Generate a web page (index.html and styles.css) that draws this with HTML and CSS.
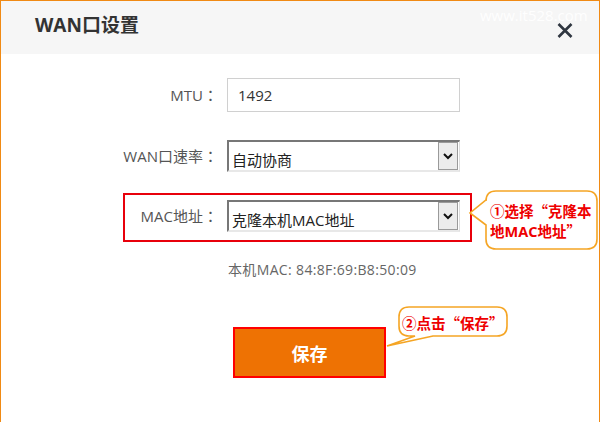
FILE: index.html
```html
<!DOCTYPE html>
<html lang="zh-CN">
<head>
<meta charset="utf-8">
<title>WAN口设置</title>
<link rel="stylesheet" href="styles.css">
</head>
<body>
<div class="dialog">
  <div class="header">
    <h1 class="title">WAN口设置</h1>
    <span class="watermark">www.it528.com</span>
    <svg class="close" width="16" height="15" viewBox="0 0 16 15"><path d="M1.5 1 L14.5 14 M14.5 1 L1.5 14" stroke="#2f3640" stroke-width="2.6" fill="none"/></svg>
  </div>
  <div class="body">
    <div class="form">
      <div class="row">
        <label class="label">MTU<span class="colon" lang="zh-Hant">：</span></label>
        <div class="input">1492</div>
      </div>
      <div class="row">
        <label class="label">WAN口速率<span class="colon" lang="zh-Hant">：</span></label>
        <div class="select">
          <span class="select-text">自动协商</span>
          <span class="select-btn"><svg width="10" height="7" viewBox="0 0 10 7"><path d="M1 1 L5 5 L9 1" stroke="#111" stroke-width="2" fill="none"/></svg></span>
        </div>
      </div>
      <div class="row">
        <label class="label">MAC地址<span class="colon" lang="zh-Hant">：</span></label>
        <div class="select">
          <span class="select-text">克隆本机MAC地址</span>
          <span class="select-btn"><svg width="10" height="7" viewBox="0 0 10 7"><path d="M1 1 L5 5 L9 1" stroke="#111" stroke-width="2" fill="none"/></svg></span>
        </div>
      </div>
    </div>
    <div class="mac-info">本机MAC: 84:8F:69:B8:50:09</div>
    <button class="save">保存</button>
  </div>

  <div class="highlight"></div>

  <div class="callout callout-1">
    <svg class="bubble" width="132" height="62" viewBox="0 0 132 62"><path d="M28 2 H119 Q129 2 129 12 V50 Q129 60 119 60 H28 Q18 60 18 50 V36 L2 24 L18 11 V12 Q18 2 28 2 Z" fill="#fff" stroke="#f5a524" stroke-width="1.6"/></svg>
    <div class="callout-text c1-text">①选择<span class="q">“</span>克隆本<br>地MAC地址<span class="q">”</span></div>
  </div>

  <div class="callout callout-2">
    <svg class="bubble" width="126" height="44" viewBox="0 0 126 44"><path d="M24 2 H112 Q122 2 122 12 V21 Q122 31 112 31 H48 L2 41 L30 31 H24 Q14 31 14 21 V12 Q14 2 24 2 Z" fill="#fff" stroke="#f5a524" stroke-width="1.6"/></svg>
    <div class="callout-text c2-text">②点击<span class="q">“</span>保存<span class="q">”</span></div>
  </div>
</div>
</body>
</html>
```
FILE: styles.css
```css
* { box-sizing: border-box; }
html, body { margin: 0; padding: 0; background: #fff; }
body { font-family: "Open Sans", "Noto Sans CJK SC", sans-serif; color: #555; }

.dialog {
  position: relative;
  width: 600px;
  height: 422px;
  border-top: 1px solid #f08a14;
  border-left: 1px solid #f08a14;
  border-right: 1px solid #f08a14;
  overflow: hidden;
}

.header {
  position: relative;
  height: 53px;
  background: #f6f6f6;
  display: flex;
  align-items: center;
  padding-left: 34px;
}
.title {
  margin: 0;
  font-size: 19px;
  font-weight: bold;
  color: #333;
  line-height: 1;
  margin-top: -4px;
}
.watermark {
  position: absolute;
  left: 479px;
  top: 4px;
  font-size: 15px;
  color: rgba(255,255,255,0.95);
}
.close {
  position: absolute;
  left: 556px;
  top: 22px;
}

.body { padding-top: 24px; }

.form {
  display: flex;
  flex-direction: column;
  gap: 28px;
}
.row {
  display: grid;
  grid-template-columns: 217px 233px;
  column-gap: 9px;
  align-items: center;
}
.label {
  text-align: right;
  font-size: 15px;
  color: #555;
  line-height: 20px;
}
.colon {
  font-family: "Noto Sans CJK TC", "Noto Sans CJK SC", sans-serif;
}
.input {
  height: 34px;
  border: 1px solid #d0d0d0;
  padding-left: 10px;
  font-size: 15px;
  line-height: 32px;
  color: #333;
}
.select {
  position: relative;
  height: 32px;
  border-top: 2px solid #777;
  border-left: 2px solid #777;
  border-right: 1px solid #ddd;
  border-bottom: 2px solid #e8e8e8;
  padding-left: 3px;
  padding-top: 8px;
  font-size: 15px;
  line-height: 20px;
  color: #222;
}
.select-btn {
  position: absolute;
  right: 1px;
  top: 0;
  width: 20px;
  height: 28px;
  background: #ececec;
  border: 1px solid #9a9a9a;
  display: flex;
  align-items: center;
  justify-content: center;
}

.mac-info {
  margin-top: 28px;
  margin-left: 227px;
  font-size: 14px;
  line-height: 20px;
  color: #666;
  letter-spacing: 0.35px;
}

.save {
  display: block;
  margin-top: 47px;
  margin-left: 232px;
  width: 153px;
  height: 51px;
  background: #ee7203;
  border: 2px solid #f00;
  color: #fff;
  font-family: "Noto Sans CJK SC", sans-serif;
  font-size: 18px;
  font-weight: bold;
  padding: 0;
}

.highlight {
  position: absolute;
  left: 122px;
  top: 192px;
  width: 349px;
  height: 49px;
  border: 2px solid #e8000b;
}

.callout { position: absolute; }
.callout .bubble { position: absolute; left: 0; top: 0; }
.callout-1 { left: 467px; top: 188px; width: 132px; height: 62px; }
.callout-2 { left: 384px; top: 304px; width: 126px; height: 44px; }
.callout-text {
  position: absolute;
  font-size: 14.5px;
  font-weight: bold;
  color: #ee0000;
  line-height: 19px;
  white-space: nowrap;
}
.callout-text .q {
  font-family: "Noto Sans CJK SC", sans-serif;
}
.c1-text { left: 22px; top: 12px; }
.c2-text { left: 17px; top: 8px; }
```
